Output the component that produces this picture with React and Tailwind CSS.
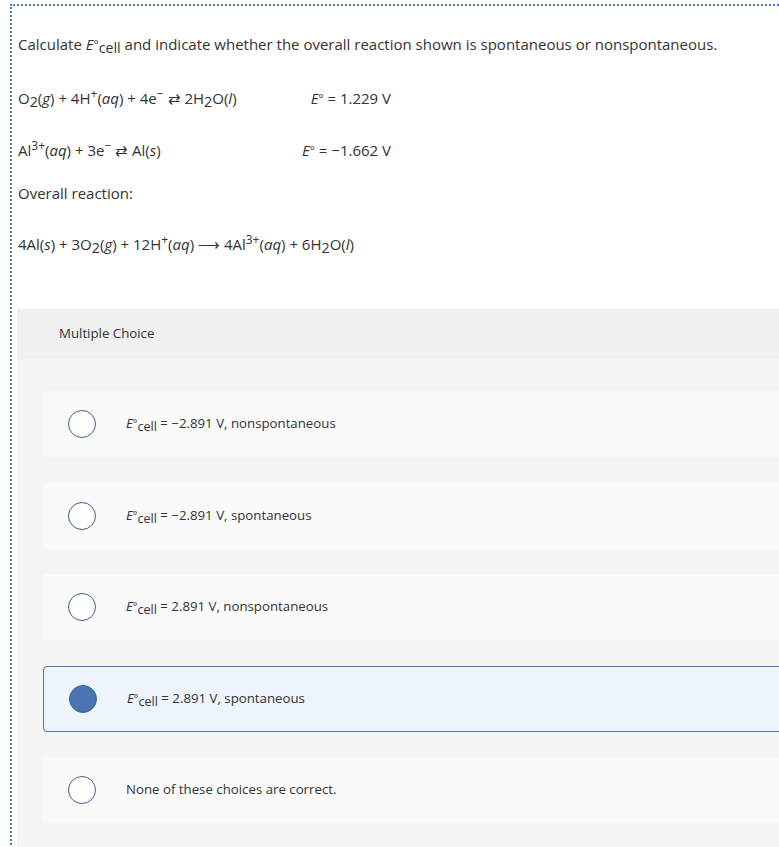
const FONT = { fontFamily: '"Open Sans", "Liberation Sans", sans-serif' }

function Ital({ children }) {
  return <span className="italic">{children}</span>
}

function Sub({ children }) {
  return <sub className="relative top-[3px] text-[0.95em] align-baseline">{children}</sub>
}

function Sup({ children }) {
  return <sup className="relative -top-[6px] text-[0.8em] align-baseline">{children}</sup>
}

function Estd() {
  return (
    <span>
      <span className="italic">E</span>
      <span className="relative -top-[1px] text-[0.8em]">°</span>
    </span>
  )
}

function Ecell() {
  return (
    <span>
      <Estd />
      <Sub>cell</Sub>
    </span>
  )
}

const OPTIONS = [
  { value: "= −2.891 V, nonspontaneous", ecell: true },
  { value: "= −2.891 V, spontaneous", ecell: true },
  { value: "= 2.891 V, nonspontaneous", ecell: true },
  { value: "= 2.891 V, spontaneous", ecell: true, selected: true },
  { value: "None of these choices are correct.", ecell: false },
]

function Option({ option }) {
  return (
    <div
      className={`flex h-[66px] w-[760px] shrink-0 items-center rounded-[4px] pl-[25px] ${
        option.selected
          ? "border border-[#4d72ad] bg-[#edf4fc] pl-[24px]"
          : "bg-[#fafafa]"
      }`}
    >
      <span
        className={`h-[28px] w-[28px] shrink-0 rounded-full border-[1.5px] ${
          option.selected
            ? "border-[#3d639f] bg-[#4a74b3]"
            : "border-[#3f5f8c] bg-white"
        }`}
      />
      <span className="ml-[30px] text-[13.25px] text-[#333]">
        {option.ecell ? (
          <>
            <Ecell /> {option.value}
          </>
        ) : (
          option.value
        )}
      </span>
    </div>
  )
}

export default function App() {
  return (
    <div className="relative h-[847px] w-[779px] overflow-hidden bg-white" style={FONT}>
      <div className="ml-[10px] mt-[4px] border-l-2 border-t-2 border-dotted border-[#4a7bc4] pl-[5px] pt-[28px] pb-[40px]">
        <p className="pl-[1px] text-[15px] leading-[20px] text-[#333]">
          Calculate <Ecell /> and indicate whether the overall reaction shown is spontaneous or
          nonspontaneous.
        </p>

        <div className="mt-[31px] flex w-[374px] justify-between pl-[1px] text-[15px] leading-[22px] text-[#333]">
          <span>
            O<Sub>2</Sub>(<Ital>g</Ital>) + 4H<Sup>+</Sup>(<Ital>aq</Ital>) + 4e<Sup>−</Sup> ⇄
            2H<Sub>2</Sub>O(<Ital>l</Ital>)
          </span>
          <span>
            <Estd /> = 1.229 V
          </span>
        </div>

        <div className="mt-[28px] flex w-[374px] justify-between pl-[1px] text-[15px] leading-[22px] text-[#333]">
          <span>
            Al<Sup>3+</Sup>(<Ital>aq</Ital>) + 3e<Sup>−</Sup> ⇄ Al(<Ital>s</Ital>)
          </span>
          <span>
            <Estd /> = −1.662 V
          </span>
        </div>

        <p className="mt-[19px] pl-[1px] text-[15px] leading-[22px] text-[#333]">Overall reaction:</p>

        <p className="mt-[29px] pl-[1px] text-[15px] leading-[22px] text-[#333]">
          4Al(<Ital>s</Ital>) + 3O<Sub>2</Sub>(<Ital>g</Ital>) + 12H<Sup>+</Sup>(<Ital>aq</Ital>) ⟶
          4Al<Sup>3+</Sup>(<Ital>aq</Ital>) + 6H<Sub>2</Sub>O(<Ital>l</Ital>)
        </p>

        <div className="mt-[54px] w-[800px]">
          <div className="flex h-[50px] items-center bg-[#f0f0f0] pl-[42px] text-[13.25px] text-[#333]">
            Multiple Choice
          </div>
          <div className="flex flex-col gap-[25.5px] bg-[#f5f5f5] pl-[26px] pt-[32px] pb-[30px]">
            {OPTIONS.map((option) => (
              <Option key={option.value} option={option} />
            ))}
          </div>
        </div>
      </div>
    </div>
  )
}
